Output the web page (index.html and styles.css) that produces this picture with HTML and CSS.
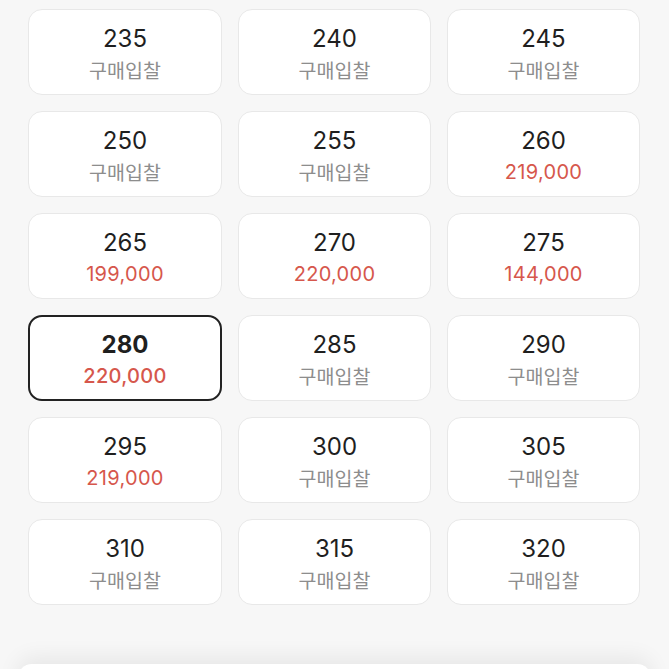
FILE: index.html
```html
<!DOCTYPE html>
<html lang="ko">
<head>
<meta charset="utf-8">
<title>사이즈 선택</title>
<link rel="stylesheet" href="styles.css">
</head>
<body>
<div class="grid">
  <div class="card"><div class="size">235</div><div class="bid">구매입찰</div></div>
  <div class="card"><div class="size">240</div><div class="bid">구매입찰</div></div>
  <div class="card"><div class="size">245</div><div class="bid">구매입찰</div></div>
  <div class="card"><div class="size">250</div><div class="bid">구매입찰</div></div>
  <div class="card"><div class="size">255</div><div class="bid">구매입찰</div></div>
  <div class="card"><div class="size">260</div><div class="price">219,000</div></div>
  <div class="card"><div class="size">265</div><div class="price">199,000</div></div>
  <div class="card"><div class="size">270</div><div class="price">220,000</div></div>
  <div class="card"><div class="size">275</div><div class="price">144,000</div></div>
  <div class="card selected"><div class="size">280</div><div class="price">220,000</div></div>
  <div class="card"><div class="size">285</div><div class="bid">구매입찰</div></div>
  <div class="card"><div class="size">290</div><div class="bid">구매입찰</div></div>
  <div class="card"><div class="size">295</div><div class="price">219,000</div></div>
  <div class="card"><div class="size">300</div><div class="bid">구매입찰</div></div>
  <div class="card"><div class="size">305</div><div class="bid">구매입찰</div></div>
  <div class="card"><div class="size">310</div><div class="bid">구매입찰</div></div>
  <div class="card"><div class="size">315</div><div class="bid">구매입찰</div></div>
  <div class="card"><div class="size">320</div><div class="bid">구매입찰</div></div>
</div>
<div class="sheet"></div>
</body>
</html>
```
FILE: styles.css
```css
html, body {
  margin: 0;
  padding: 0;
  background: #f7f7f7;
  height: 100%;
  overflow: hidden;
}
body {
  font-family: "Inter", "Noto Sans CJK KR", sans-serif;
}
.grid {
  display: grid;
  grid-template-columns: 194px 193px 193px;
  grid-auto-rows: 86px;
  column-gap: 16px;
  row-gap: 16px;
  padding: 9px 29px 0 28px;
}
.card {
  box-sizing: border-box;
  background: #fff;
  border: 1px solid #e8e8e8;
  border-radius: 14px;
  display: flex;
  flex-direction: column;
  align-items: center;
  justify-content: center;
  gap: 1px;
  padding-top: 2px;
}
.size {
  font-size: 24px;
  line-height: 32px;
  color: #1f1f1f;
  font-weight: 400;
}
.bid {
  font-family: "Noto Sans CJK KR", sans-serif;
  font-size: 19.5px;
  line-height: 28px;
  color: #8d8d8d;
}
.price {
  font-size: 20px;
  line-height: 28px;
  letter-spacing: 0.3px;
  color: #d6574c;
}
.selected {
  border: 2px solid #222;
}
.selected .size {
  font-weight: 700;
}
.selected .price {
  font-weight: 500;
}
.sheet {
  position: fixed;
  left: 18px;
  right: 18px;
  top: 664px;
  height: 40px;
  background: #fff;
  border-radius: 14px 14px 0 0;
  box-shadow: 0 -6px 22px rgba(0, 0, 0, 0.07);
}
```
